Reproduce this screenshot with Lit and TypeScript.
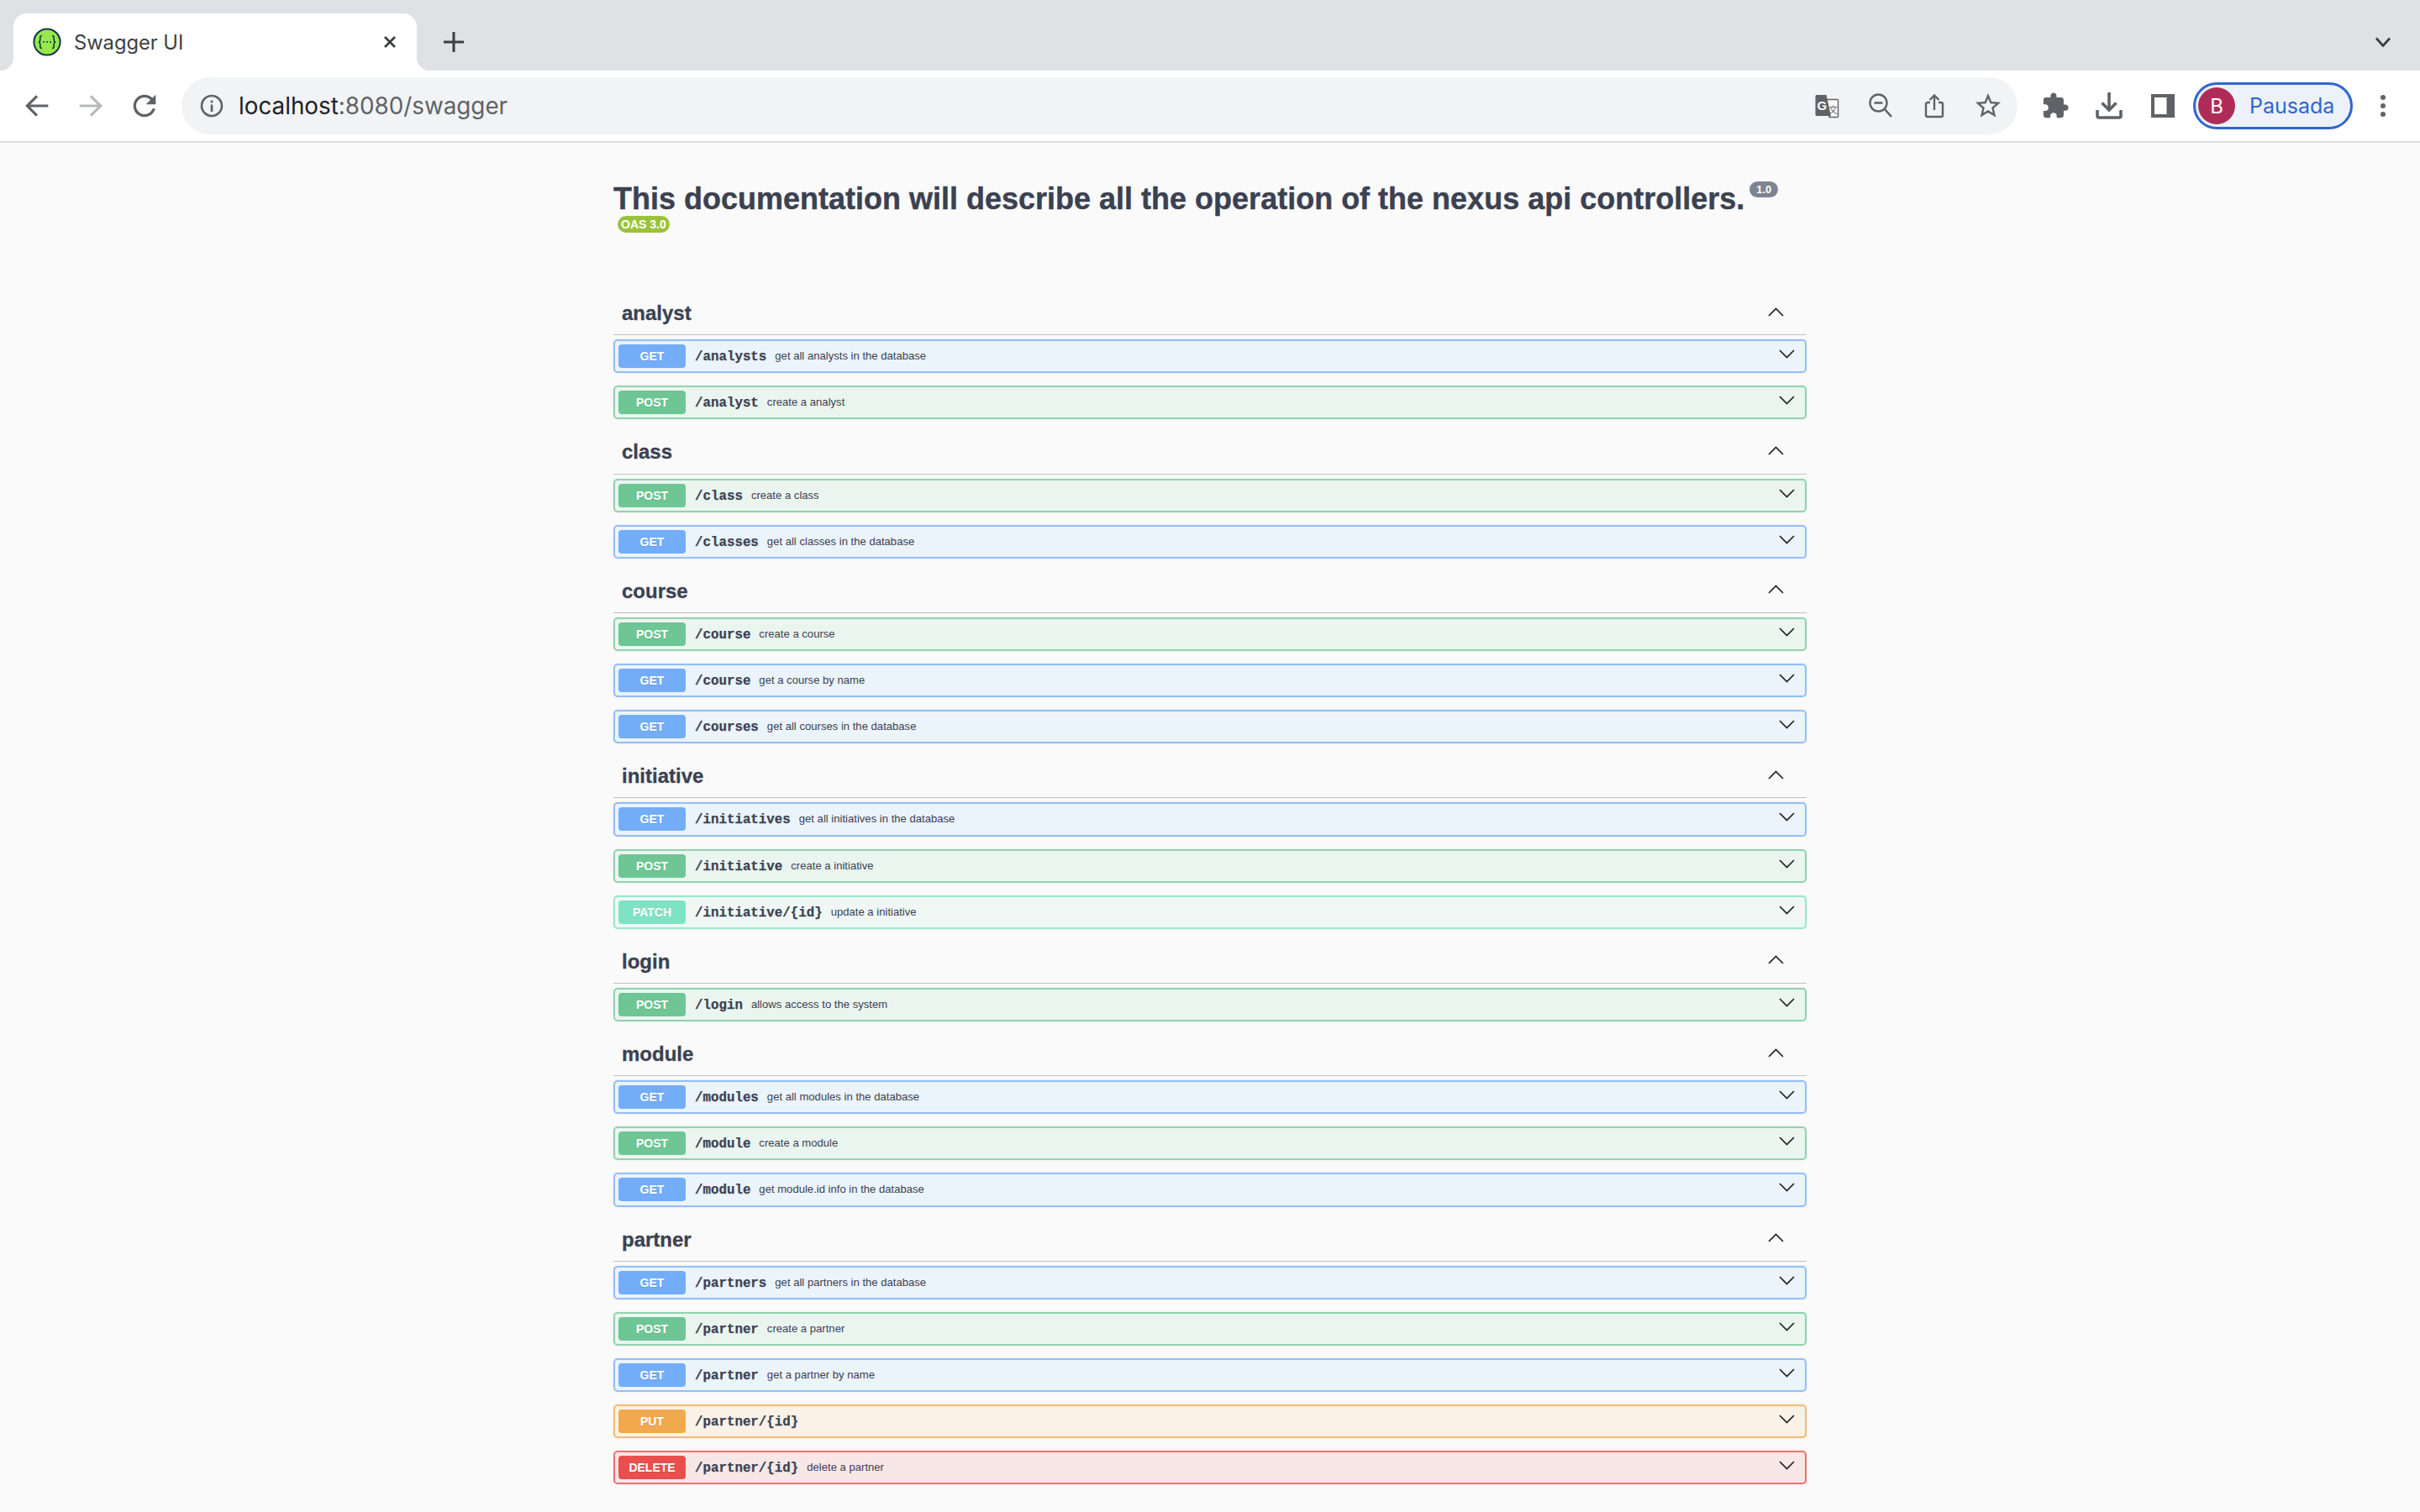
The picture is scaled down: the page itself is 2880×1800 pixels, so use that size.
import { LitElement, css, html, svg } from 'lit';
import { customElement } from 'lit/decorators.js';

type Op = { method: string; path: string; desc: string };
type Tag = { name: string; ops: Op[] };

const op = (method: string, path: string, desc = ''): Op => ({ method, path, desc });

const TAGS: Tag[] = [
  { name: 'analyst', ops: [op('GET', '/analysts', 'get all analysts in the database'), op('POST', '/analyst', 'create a analyst')] },
  { name: 'class', ops: [op('POST', '/class', 'create a class'), op('GET', '/classes', 'get all classes in the database')] },
  {
    name: 'course',
    ops: [
      op('POST', '/course', 'create a course'),
      op('GET', '/course', 'get a course by name'),
      op('GET', '/courses', 'get all courses in the database'),
    ],
  },
  {
    name: 'initiative',
    ops: [
      op('GET', '/initiatives', 'get all initiatives in the database'),
      op('POST', '/initiative', 'create a initiative'),
      op('PATCH', '/initiative/{id}', 'update a initiative'),
    ],
  },
  { name: 'login', ops: [op('POST', '/login', 'allows access to the system')] },
  {
    name: 'module',
    ops: [
      op('GET', '/modules', 'get all modules in the database'),
      op('POST', '/module', 'create a module'),
      op('GET', '/module', 'get module.id info in the database'),
    ],
  },
  {
    name: 'partner',
    ops: [
      op('GET', '/partners', 'get all partners in the database'),
      op('POST', '/partner', 'create a partner'),
      op('GET', '/partner', 'get a partner by name'),
      op('PUT', '/partner/{id}'),
      op('DELETE', '/partner/{id}', 'delete a partner'),
    ],
  },
];

const icon = (size: number, body: unknown, box = 24) => html`<svg
  width=${size}
  height=${size}
  viewBox="0 0 ${box} ${box}"
  fill="currentColor"
>
  ${body}
</svg>`;

@customElement('browser-bar')
export class BrowserBar extends LitElement {
  render() {
    return html`
      <div class="strip">
        <div class="tab">
          <svg class="favicon" width="34" height="34" viewBox="0 0 34 34">
            <circle cx="17" cy="17" r="15.6" fill="#96e84c" stroke="#173647" stroke-width="2" />
            <path
              d="M11 9.5c-2.6 0-2.2 2.2-2.2 4.4 0 1.8-.6 3-2 3.1 1.4.1 2 1.3 2 3.1 0 2.2-.4 4.4 2.2 4.4M23 9.5c2.6 0 2.2 2.2 2.2 4.4 0 1.8.6 3 2 3.1-1.4.1-2 1.3-2 3.1 0 2.2.4 4.4-2.2 4.4"
              fill="none"
              stroke="#173647"
              stroke-width="1.6"
            />
            <circle cx="13" cy="17" r="1" fill="#173647" />
            <circle cx="17" cy="17" r="1" fill="#173647" />
            <circle cx="21" cy="17" r="1" fill="#173647" />
          </svg>
          <span class="tab-title">Swagger UI</span>
          <svg class="tab-close" width="16" height="16" viewBox="0 0 16 16">
            <path d="M2 2l12 12M14 2L2 14" stroke="#3c4043" stroke-width="2.8" fill="none" />
          </svg>
        </div>
        <svg class="new-tab" width="24" height="24" viewBox="0 0 24 24">
          <path d="M12 0v24M0 12h24" stroke="#3c4043" stroke-width="3" fill="none" />
        </svg>
        <svg class="tab-list" width="20" height="12" viewBox="0 0 20 12">
          <path d="M2 1.5l8 9 8-9" stroke="#3c4043" stroke-width="2.8" fill="none" />
        </svg>
      </div>
      <div class="toolbar">
        <span class="btn">
          ${icon(40, svg`<path d="M20 12H5M12 5l-7 7 7 7" fill="none" stroke="currentColor" stroke-width="1.9"/>`)}
        </span>
        <span class="btn off">
          ${icon(40, svg`<path d="M4 12h15M12 5l7 7-7 7" fill="none" stroke="currentColor" stroke-width="1.9"/>`)}
        </span>
        <span class="btn">
          ${icon(
            40,
            svg`<path d="M17.65 6.35A7.958 7.958 0 0 0 12 4c-4.42 0-7.99 3.58-7.99 8s3.57 8 7.99 8c3.73 0 6.84-2.55 7.73-6h-2.08A5.99 5.99 0 0 1 12 18c-3.31 0-6-2.69-6-6s2.69-6 6-6c1.66 0 3.14.69 4.22 1.78L13 11h7V4l-2.35 2.35z"/>`
          )}
        </span>
        <div class="omnibox">
          <span class="site-info">
            <svg width="28" height="28" viewBox="0 0 28 28">
              <circle cx="14" cy="14" r="12" fill="none" stroke="currentColor" stroke-width="2.6" />
              <rect x="12.7" y="12.5" width="2.6" height="8.5" fill="currentColor" />
              <rect x="12.7" y="7.6" width="2.6" height="2.8" fill="currentColor" />
            </svg>
          </span>
          <span class="url"><span class="host">localhost</span>:8080/swagger</span>
          <span class="btn">
            <svg width="30" height="30" viewBox="0 0 30 30">
              <path d="M13 7.5h14.5a1 1 0 0 1 1 1v19a1 1 0 0 1-1 1H18z" fill="#fafafa" stroke="currentColor" stroke-width="1.4" />
              <path d="M3 2h11.5l5.5 25H3a1.5 1.5 0 0 1-1.5-1.5v-22A1.5 1.5 0 0 1 3 2z" fill="currentColor" />
              <text class="glyph-g" x="3.5" y="20">G</text>
              <text class="glyph-wen" x="17" y="24">文</text>
            </svg>
          </span>
          <span class="btn">
            <svg width="30" height="32" viewBox="0 0 30 32">
              <circle cx="12.5" cy="12.5" r="10" fill="none" stroke="currentColor" stroke-width="2.4" />
              <path d="M7.5 12.5h10M19.5 19.5L28 29" fill="none" stroke="currentColor" stroke-width="2.6" />
            </svg>
          </span>
          <span class="btn">
            <svg width="24" height="30" viewBox="0 0 24 30">
              <path
                d="M7 11H4a2 2 0 0 0-2 2v13a2 2 0 0 0 2 2h16a2 2 0 0 0 2-2V13a2 2 0 0 0-2-2h-3M12 20V2.5M6.5 8L12 2.5 17.5 8"
                fill="none"
                stroke="currentColor"
                stroke-width="2.4"
              />
            </svg>
          </span>
          <span class="btn">
            ${icon(
              36,
              svg`<path d="M22 9.24l-7.19-.62L12 2 9.19 8.63 2 9.24l5.46 4.73L5.82 21 12 17.27 18.18 21l-1.63-7.03L22 9.24zM12 15.4l-3.76 2.27 1-4.28-3.32-2.88 4.38-.38L12 6.1l1.71 4.04 4.38.38-3.32 2.88 1 4.28L12 15.4z"/>`
            )}
          </span>
        </div>
        <span class="btn ext">
          ${icon(
            34,
            svg`<path d="M20.5 11H19V7c0-1.1-.9-2-2-2h-4V3.5C13 2.12 11.88 1 10.5 1S8 2.12 8 3.5V5H4c-1.1 0-1.99.9-1.99 2v3.8H3.5c1.49 0 2.7 1.21 2.7 2.7s-1.21 2.7-2.7 2.7H2V20c0 1.1.9 2 2 2h3.8v-1.5c0-1.49 1.21-2.7 2.7-2.7 1.49 0 2.7 1.21 2.7 2.7V22H17c1.1 0 2-.9 2-2v-4h1.5c1.38 0 2.5-1.12 2.5-2.5S21.88 11 20.5 11z"/>`
          )}
        </span>
        <span class="btn">
          <svg width="32" height="32" viewBox="0 0 32 32">
            <path d="M16 0v20M7.5 12.5L16 21l8.5-8.5" fill="none" stroke="currentColor" stroke-width="3.6" />
            <path d="M2 21v7a2 2 0 0 0 2 2h24a2 2 0 0 0 2-2v-7" fill="none" stroke="currentColor" stroke-width="3.6" />
          </svg>
        </span>
        <span class="btn">
          <svg width="28" height="28" viewBox="0 0 28 28">
            <path fill-rule="evenodd" d="M0 0h28v28H0zM4 4v20h14.5V4z" fill="currentColor" />
          </svg>
        </span>
        <div class="profile">
          <span class="avatar">B</span>
          <span class="profile-name">Pausada</span>
        </div>
        <span class="btn menu">
          <svg width="8" height="30" viewBox="0 0 8 30">
            <circle cx="4" cy="5" r="3" fill="currentColor" />
            <circle cx="4" cy="15" r="3" fill="currentColor" />
            <circle cx="4" cy="25" r="3" fill="currentColor" />
          </svg>
        </span>
      </div>
    `;
  }

  static styles = css`
    :host {
      display: block;
      font-family: Inter, Roboto, 'Liberation Sans', sans-serif;
      color: #5f6368;
    }
    .strip {
      height: 84px;
      background: #dfe1e5;
      display: flex;
      align-items: flex-end;
      padding-left: 16px;
    }
    .tab {
      position: relative;
      width: 480px;
      height: 68px;
      background: #fff;
      border-radius: 16px 16px 0 0;
      display: flex;
      align-items: center;
      box-sizing: border-box;
      padding-left: 23px;
    }
    .tab::before,
    .tab::after {
      content: '';
      position: absolute;
      bottom: 0;
      width: 16px;
      height: 16px;
    }
    .tab::before {
      left: -16px;
      background: radial-gradient(circle at 0 0, #dfe1e5 16px, #fff 16.5px);
    }
    .tab::after {
      right: -16px;
      background: radial-gradient(circle at 100% 0, #dfe1e5 16px, #fff 16.5px);
    }
    .tab-title {
      margin-left: 15px;
      font-size: 23.7px;
      color: #3c4043;
      white-space: nowrap;
    }
    .tab-close {
      margin-left: auto;
      margin-right: 24px;
    }
    .new-tab {
      margin: 0 0 22px 32px;
    }
    .tab-list {
      margin: 0 34px 28px auto;
    }
    .toolbar {
      height: 84px;
      background: #fff;
      display: flex;
      align-items: center;
      padding: 0 12px;
      box-sizing: border-box;
    }
    .btn {
      width: 64px;
      height: 64px;
      flex: none;
      display: flex;
      align-items: center;
      justify-content: center;
    }
    .off {
      color: #b6b8bb;
    }
    .omnibox {
      flex: 1;
      height: 68px;
      margin-left: 12px;
      border-radius: 34px;
      background: #f1f3f4;
      display: flex;
      align-items: center;
      padding: 0 3px 0 22px;
    }
    .site-info {
      display: flex;
    }
    .url {
      flex: 1;
      margin-left: 18px;
      font-size: 27.8px;
      color: #5f6368;
    }
    .host {
      color: #202124;
    }
    .glyph-g {
      font: 700 15px 'Liberation Sans', sans-serif;
      fill: #fff;
    }
    .glyph-wen {
      font: 400 11px 'Noto Sans CJK SC', sans-serif;
      fill: currentColor;
    }
    .ext {
      margin-left: 13px;
    }
    .profile {
      width: 190px;
      height: 56px;
      margin-left: 4px;
      box-sizing: border-box;
      border: 3px solid #2f66cf;
      border-radius: 28px;
      background: #ecf1fb;
      display: flex;
      align-items: center;
      padding-left: 3px;
    }
    .avatar {
      width: 44px;
      height: 44px;
      border-radius: 50%;
      background: #b02c58;
      color: #fff;
      font-size: 24px;
      display: flex;
      align-items: center;
      justify-content: center;
    }
    .profile-name {
      margin-left: 17px;
      font-size: 25px;
      color: #2f66cf;
    }
    .menu {
      margin-left: 4px;
    }
  `;
}

@customElement('swagger-doc')
export class SwaggerDoc extends LitElement {
  renderOp(o: Op) {
    return html`<div class="op ${o.method.toLowerCase()}">
      <span class="method">${o.method}</span>
      <span class="path">${o.path}</span>
      <span class="desc">${o.desc}</span>
      <svg class="chev" width="19" height="11" viewBox="0 0 19 11">
        <path d="M1 1l8.5 8.5L18 1" fill="none" stroke="#222" stroke-width="1.7" />
      </svg>
    </div>`;
  }

  renderTag(t: Tag) {
    return html`<section>
      <h3 class="tag">
        <span>${t.name}</span>
        <svg class="chev-up" width="19" height="11" viewBox="0 0 19 11">
          <path d="M1 10l8.5-8.5L18 10" fill="none" stroke="#222" stroke-width="1.7" />
        </svg>
      </h3>
      ${t.ops.map((o) => this.renderOp(o))}
    </section>`;
  }

  render() {
    return html`
      <div class="title-row">
        <h2>This documentation will describe all the operation of the nexus api controllers.</h2>
        <span class="version">1.0</span>
      </div>
      <span class="oas">OAS 3.0</span>
      <div class="tags">${TAGS.map((t) => this.renderTag(t))}</div>
    `;
  }

  static styles = css`
    :host {
      display: block;
      width: 1420px;
      margin: 0 auto;
      padding-top: 47px;
      font-family: 'Liberation Sans', Arial, sans-serif;
      color: #3b4151;
    }
    .title-row {
      display: flex;
      align-items: flex-start;
    }
    h2 {
      margin: 0;
      font-size: 36px;
      line-height: 40px;
      font-weight: 700;
      white-space: nowrap;
      -webkit-text-stroke: 0.4px #3b4151;
    }
    .version {
      margin: -1px 0 0 6px;
      height: 19px;
      padding: 0 8px;
      border-radius: 10px;
      background: #7d8492;
      color: #fff;
      font-size: 13px;
      line-height: 19px;
      font-weight: 700;
    }
    .oas {
      display: block;
      width: fit-content;
      margin-left: 5px;
      height: 20px;
      padding: 0 4px;
      border-radius: 10px;
      background: #9bc33a;
      color: #fff;
      font-size: 14px;
      line-height: 20px;
      font-weight: 700;
    }
    .tags {
      margin-top: 72px;
    }
    .tag {
      margin: 0 0 5px;
      height: 50.125px;
      box-sizing: border-box;
      border-bottom: 1px solid #bfc0c3;
      padding: 0 27px 1px 10px;
      display: flex;
      align-items: center;
      justify-content: space-between;
      font-size: 24px;
      font-weight: 700;
      -webkit-text-stroke: 0.3px #3b4151;
    }
    .chev-up {
      margin-bottom: 4px;
    }
    .chev {
      margin-bottom: 5px;
    }
    .op {
      height: 40.125px;
      margin-bottom: 15px;
      box-sizing: border-box;
      border: 2px solid;
      border-radius: 5px;
      display: flex;
      align-items: center;
      padding: 0 12px 0 4px;
      box-shadow: 0 0 3px rgba(0, 0, 0, 0.08);
    }
    .method {
      width: 80px;
      height: 28px;
      flex: none;
      border-radius: 4px;
      color: #fff;
      font-size: 14px;
      line-height: 28px;
      font-weight: 700;
      text-align: center;
      text-shadow: 0 1px 0 rgba(0, 0, 0, 0.1);
    }
    .path {
      margin: 2px 0 0 11px;
      font-family: 'Liberation Mono', monospace;
      font-size: 15.8px;
      font-weight: 700;
      -webkit-text-stroke: 0.25px #3b4151;
    }
    .desc {
      flex: 1;
      margin: 0 0 1px 10px;
      font-size: 13.1px;
    }
    .get {
      background: #ebf3fb;
      border-color: #93bff7;
    }
    .get .method {
      background: #73adf8;
    }
    .post {
      background: #ebf5f0;
      border-color: #90d3ae;
    }
    .post .method {
      background: #6dc694;
    }
    .patch {
      background: #eff8f5;
      border-color: #98e8cd;
    }
    .patch .method {
      background: #7ee3c2;
    }
    .put {
      background: #faf1e7;
      border-color: #f4ba72;
    }
    .put .method {
      background: #f1a94d;
    }
    .delete {
      background: #f8e7e7;
      border-color: #ed726f;
    }
    .delete .method {
      background: #e94f4c;
    }
  `;
}

@customElement('app-root')
export class AppRoot extends LitElement {
  render() {
    return html`<browser-bar></browser-bar>
      <div class="rule"></div>
      <swagger-doc></swagger-doc>`;
  }

  static styles = css`
    :host {
      display: block;
      width: 2880px;
      height: 1800px;
      overflow: hidden;
      background: #fafafa;
    }
    .rule {
      height: 2px;
      background: #dadce0;
    }
  `;
}
